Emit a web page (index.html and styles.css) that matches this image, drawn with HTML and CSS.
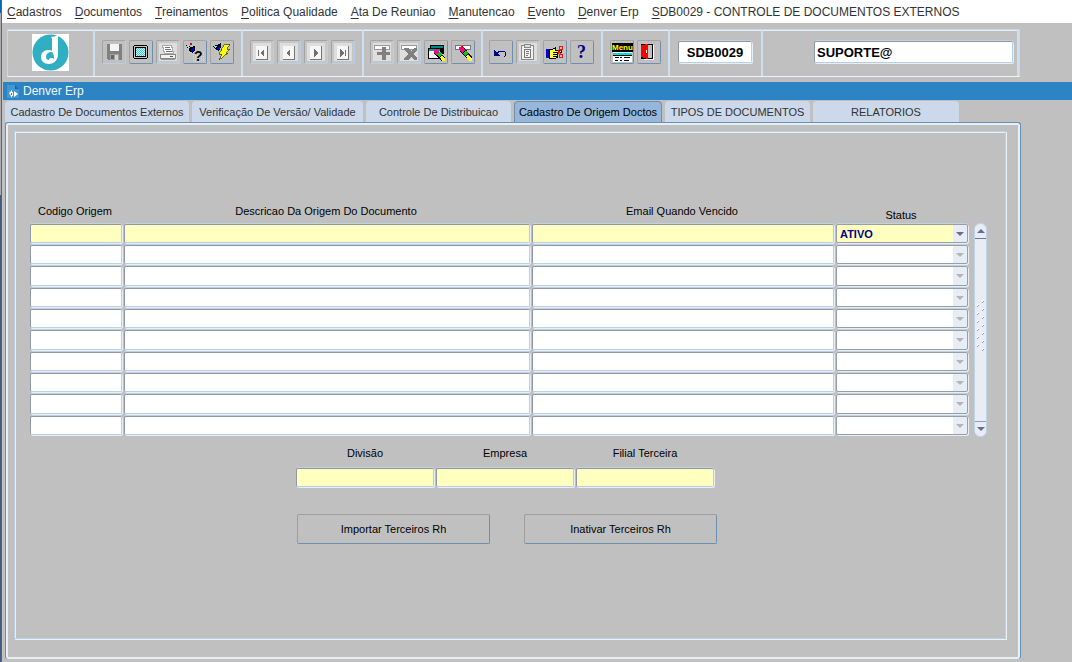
FILE: index.html
```
<!DOCTYPE html>
<html lang="pt-BR">
<head>
    <meta charset="UTF-8">
    <meta name="viewport" content="width=device-width, initial-scale=1.0">
    <title>Denver Erp</title>
    <link rel="stylesheet" href="styles.css">
</head>
<body>
    <div class="edge"></div>
    <div class="window">
        <nav class="menubar">
            <a href="#"><u>C</u>adastros</a>
            <a href="#"><u>D</u>ocumentos</a>
            <a href="#"><u>T</u>reinamentos</a>
            <a href="#"><u>P</u>olitica Qualidade</a>
            <a href="#"><u>A</u>ta De Reuniao</a>
            <a href="#"><u>M</u>anutencao</a>
            <a href="#"><u>E</u>vento</a>
            <a href="#"><u>D</u>enver Erp</a>
            <a href="#"><u>S</u>DB0029 - CONTROLE DE DOCUMENTOS EXTERNOS</a>
        </nav>

        <header class="toolbar">
            <div class="group">
                <svg class="logo" viewBox="0 0 37 37">
                    <rect width="37" height="37" fill="#fff"/>
                    <circle cx="18.5" cy="18.5" r="18" fill="#2fafc1"/>
                    <path d="M19 3c2 0 5-1 7-2v19c0 6-4 10-9 10-5 0-8-3-8-7s3-7 7-7c2 0 3 0 4 1V7c0-2 0-3-1-4z" fill="#fff"/>
                    <path d="M20 18c-4 0-6 2-6 5 0 2 1 3 3 3 0-2 4-3 5-1 0-2 0-5-2-7z" fill="#2fafc1"/>
                    <path d="M17 26c0-2 3-2 3-1 1 2-2 3-4 2z" fill="#fff"/>
                </svg>
            </div>
            <div class="group">
                <button class="tool off" aria-label="Salvar">
                    <svg viewBox="0 0 22 22"><path d="M4 3h14l1 1v15H5l-1-1z" fill="#808080"/><path d="M7 3h9v7H7z" fill="#f4f4f4"/><path d="M7 13h9v6H7z" fill="#a0a0a0"/><path d="M8 14h3v4H8z" fill="#666"/><path d="M12 14h3v5h-3z" fill="#d4d4d4"/></svg>
                </button>
                <button class="tool" aria-label="Imprimir tela">
                    <svg viewBox="0 0 22 22"><path d="M4 4h13v1h1v12h-1v1H4v-1H3V5h1z" fill="#000"/><path d="M4 5h13v12H4z" fill="#c0c0c0"/><path d="M5 6h11v10H5z" fill="#000"/><path d="M6 7h9v8H6z" fill="#d8ffff"/><path d="M6 7.500h9M6 9.500h9M6 11.500h9M6 13.500h9" stroke="#3cc8d4" stroke-dasharray="1 1"/><path d="M7 8.500h8M7 10.500h8M7 12.500h8M7 14.500h8" stroke="#3cc8d4" stroke-dasharray="1 1"/></svg>
                </button>
                <button class="tool off lit" aria-label="Imprimir">
                    <svg viewBox="0 0 22 22"><path d="M5.500 4.500h9l2 8h-9z" fill="#fff" stroke="#aaa"/><path d="M8 6.500h5M8 8.500h6M9 10.500h6" stroke="#777"/><path d="M3.500 13.500h15v4h-15z" fill="#f2f2f2" stroke="#888"/><path d="M4 18.500h14" stroke="#999"/><path d="M13 15.500h3" stroke="#555"/></svg>
                </button>
                <button class="tool" aria-label="Entrar consulta">
                    <svg viewBox="0 0 22 22"><path d="M2 4l5 2 4-1v4l-2 3-3-1z" fill="#000"/><path d="M3 5l3 1-1 3z" fill="#7ee"/><path d="M6 9l4-3v4l-2 1z" fill="#00d"/><path d="M6 2h2v2H6z" fill="#d00"/><path d="M9.500 11v10M11.500 10v11M13.500 10v11M15.500 10v11M17.500 11v10M19.500 11v10" stroke="#f2e94a" stroke-dasharray="1 1"/><text x="10" y="20" class="mark">?</text></svg>
                </button>
                <button class="tool" aria-label="Executar consulta">
                    <svg viewBox="0 0 22 22"><path d="M2 5l4-1 4-2v4l-2 4-3-1z" fill="#000"/><path d="M3 5h3l-1 3z" fill="#7ee"/><path d="M6 7l3-3v3l-2 2z" fill="#00d"/><path d="M14 3h5l-3 5h3l-4 4h2L8 19l3-6H8l3-5h-1z" fill="#ff0" stroke="#333" stroke-width=".7"/></svg>
                </button>
            </div>
            <div class="group">
                <button class="tool off lit" aria-label="Primeiro"><svg viewBox="0 0 22 22"><path d="M5 5h12v14H5z" fill="#777"/><path d="M5 5h11v13H5z" fill="#f6f6f6"/><path d="M7 9h1v6H7zM13 8v8l-4-4z" fill="#707070"/></svg></button>
                <button class="tool off lit" aria-label="Anterior"><svg viewBox="0 0 22 22"><path d="M5 5h12v14H5z" fill="#777"/><path d="M5 5h11v13H5z" fill="#f6f6f6"/><path d="M12 8v8l-4-4z" fill="#707070"/></svg></button>
                <button class="tool off lit" aria-label="Proximo"><svg viewBox="0 0 22 22"><path d="M5 5h12v14H5z" fill="#777"/><path d="M5 5h11v13H5z" fill="#f6f6f6"/><path d="M9 8v8l4-4z" fill="#707070"/></svg></button>
                <button class="tool off lit" aria-label="Ultimo"><svg viewBox="0 0 22 22"><path d="M5 5h12v14H5z" fill="#777"/><path d="M5 5h11v13H5z" fill="#f6f6f6"/><path d="M8 8v8l4-4zM13 9h1v6h-1z" fill="#707070"/></svg></button>
            </div>
            <div class="group">
                <button class="tool off lit" aria-label="Inserir"><svg viewBox="0 0 22 22"><path d="M3 4h16v5H3z" fill="#999"/><path d="M4 5h14v3H4z" fill="#fff"/><path d="M11 6h4v5h4v3h-4v5h-4v-5H6v-3h5z" fill="#808080"/></svg></button>
                <button class="tool off lit" aria-label="Remover"><svg viewBox="0 0 22 22"><path d="M3 4h16v5H3z" fill="#999"/><path d="M4 5h14v3H4z" fill="#fff"/><path d="M6 7h4l3 3 3-3h3v2l-4 4 4 4v2h-3l-3-3-3 3H6v-2l4-4-4-4z" fill="#808080"/></svg></button>
                <button class="tool" aria-label="Limpar bloco"><svg viewBox="0 0 22 22"><path d="M5 4h14v9H5z" fill="#000"/><path d="M6 5h12v2H6z" fill="#088"/><path d="M3 7h13v11H3z" fill="#000"/><path d="M4 8h11v2H4z" fill="#099"/><path d="M4 10h11v7H4z" fill="#f0f0f0"/><path d="M9 9l3-1 8 9v3h-4l-7-8z" fill="#000"/><path d="M9 9l3-1 2 3-3 3-2-2z" fill="#f08"/><path d="M12 13l3-3 2 3-3 3z" fill="#0c2"/><path d="M15 16l2-2 3 4v2h-3z" fill="#ff2"/></svg></button>
                <button class="tool" aria-label="Limpar registro"><svg viewBox="0 0 22 22"><path d="M3 4h16v5H3z" fill="#777"/><path d="M4 5h14v3H4z" fill="#fff"/><path d="M8 6l3-1 9 11v4h-3L8 10z" fill="#000"/><path d="M7 6l4-1 2 4-3 3-3-3z" fill="#f08"/><path d="M9 5h2v2H9z" fill="#f00"/><path d="M11 12l3-3 2 3-3 3z" fill="#0c2"/><path d="M14 15l2-2 4 5v2h-3z" fill="#ff2"/></svg></button>
            </div>
            <div class="group">
                <button class="tool" aria-label="Desfazer"><svg viewBox="0 0 22 22"><path d="M6 13c3-4 10-4 10 0 0 1-1 3-2 3" fill="none" stroke="#000080"/><path d="M4 9v6h6z" fill="#000080"/></svg></button>
                <button class="tool off lit" aria-label="Lista"><svg viewBox="0 0 22 22"><path d="M4.500 4.500h12v14h-12z" fill="#f2f2f2" stroke="#888"/><path d="M7.500 3.500h6v3h-6z" fill="#ddd" stroke="#888"/><path d="M7.500 8.500h6v8h-6zM9 10.500h3M9 12.500h3M9 14.500h2" fill="none" stroke="#777"/></svg></button>
                <button class="tool" aria-label="Recortar"><svg viewBox="0 0 22 22"><path d="M2 8h3v9H2z" fill="#00c"/><path d="M5.500 8.500h3l3-2v3h6v2h-4v5l-3 1h-5z" fill="#ff3" stroke="#000"/><path d="M9 11.500h5M9 13.500h5M9 15.500h4" stroke="#000"/><path d="M15.500 5.500h3v3h-3zM15.500 13.500h3v3h-3z" fill="none" stroke="#e11"/><path d="M14 13l3-4M14 9l3 5" stroke="#e11"/></svg></button>
                <button class="tool" aria-label="Ajuda"><svg viewBox="0 0 22 22"><text x="6" y="17" class="mark big">?</text></svg></button>
            </div>
            <div class="group">
                <button class="tool" aria-label="Menu"><svg viewBox="0 0 22 22"><path d="M1 2h21v9H1z" fill="#000"/><text x="1" y="9" class="menu-word">Menu</text><path d="M2 11h19v1H2z" fill="#fff"/><path d="M2 12h19v2H2z" fill="#0dd"/><path d="M2 14h19v1H2z" fill="#000"/><path d="M2 15h19v6H2z" fill="#fff"/><path d="M4 16.500h4M4 19.500h3M9 16.500h2M9 19.500h2M13 16.500h6M13 19.500h5" stroke="#000"/></svg></button>
                <button class="tool" aria-label="Sair"><svg viewBox="0 0 22 22"><path d="M3 3h12v15H3z" fill="#000"/><path d="M10 4h4v13h-4z" fill="#c0c0c0"/><path d="M15 4h1v15H6v-1h9z" fill="#fff"/><path d="M3 4l7-1v15l-7-2z" fill="#f00"/><path d="M8 9h1v3H8z" fill="#fff"/></svg></button>
            </div>
            <div class="group">
                <input class="code" type="text" value="SDB0029" aria-label="Programa">
            </div>
            <div class="group end">
                <input class="user" type="text" value="SUPORTE@" aria-label="Usuario">
            </div>
        </header>

        <div class="titlebar">
            <svg viewBox="0 0 13 14"><path d="M0 1h8l4 4v9H0z" fill="#4199d4"/><path d="M8 1v4h4z" fill="#176aa8"/><path d="M2 9l3-3v2h1v4H5v2zM7 7l4 3-4 3z" fill="#fff"/><path d="M4 9h1v2H4z" fill="#2c84c4"/></svg>
            <span>Denver Erp</span>
        </div>

        <div class="tabs" role="tablist">
            <button role="tab">Cadastro De Documentos Externos</button>
            <button role="tab">Verificação De Versão/ Validade</button>
            <button role="tab">Controle De Distribuicao</button>
            <button role="tab" class="active" aria-selected="true">Cadastro De Origem Doctos</button>
            <button role="tab">TIPOS DE DOCUMENTOS</button>
            <button role="tab">RELATORIOS</button>
        </div>

        <main class="panel">
            <form class="canvas">
                <div class="records">
                    <table>
                        <colgroup>
                            <col class="col-codigo">
                            <col class="col-descricao">
                            <col class="col-email">
                            <col class="col-status">
                        </colgroup>
                        <thead>
                            <tr>
                                <th>Codigo Origem</th>
                                <th>Descricao Da Origem Do Documento</th>
                                <th>Email Quando Vencido</th>
                                <th class="low">Status</th>
                            </tr>
                        </thead>
                        <tbody id="rows">
                            <tr class="current">
                                <td><input type="text" aria-label="Codigo Origem"></td>
                                <td><input type="text" aria-label="Descricao Da Origem Do Documento"></td>
                                <td><input type="text" aria-label="Email Quando Vencido"></td>
                                <td><span class="combo"><select aria-label="Status"><option>ATIVO</option><option>INATIVO</option></select></span></td>
                            </tr>
                        </tbody>
                    </table>
                    <div class="scrollbar">
                        <button type="button" class="up" aria-label="Subir"></button>
                        <div class="thumb">
                            <svg viewBox="0 0 9 52">
                                <defs>
                                    <pattern id="grip" width="9" height="8" patternUnits="userSpaceOnUse">
                                        <path d="M6 0h2v1H7v1H6zM1 4h2v1H2v1H1z" fill="#fff"/>
                                        <path d="M7 1h1v1H7v1H6V2h1zM2 5h1v1H2v1H1V6h1z" fill="#8aa2ba"/>
                                    </pattern>
                                </defs>
                                <rect width="9" height="52" fill="url(#grip)"/>
                            </svg>
                        </div>
                        <button type="button" class="down" aria-label="Descer"></button>
                    </div>
                </div>

                <div class="filters">
                    <div><label for="divisao">Divisão</label><input type="text" id="divisao"></div>
                    <div><label for="empresa">Empresa</label><input type="text" id="empresa"></div>
                    <div><label for="filial">Filial Terceira</label><input type="text" id="filial"></div>
                </div>

                <div class="actions">
                    <button type="button">Importar Terceiros Rh</button>
                    <button type="button">Inativar Terceiros Rh</button>
                </div>
            </form>
        </main>
    </div>

    <script src="script.js"></script>
</body>
</html>
```
FILE: styles.css
```
* {
    margin: 0;
    padding: 0;
    box-sizing: border-box;
    font-family: "Liberation Sans", Arial, sans-serif;
}

body {
    display: flex;
    min-height: 100vh;
    background: #c0c0c0;
    color: #000;
    font-size: 11px;
}

.edge {
    width: 2px;
    background: linear-gradient(#0b64b8 13px, #a9abb0 13px, #a9abb0 195px, #46597c 195px);
    border-right: 1px solid #5c6470;
}

.window {
    flex: 1;
    display: flex;
    flex-direction: column;
    padding-bottom: 3px;
}

.menubar {
    display: flex;
    gap: 13px;
    height: 23px;
    padding: 0 5px;
    line-height: 24px;
    background: #fff;
}

.menubar a {
    color: #333;
    font-size: 12px;
    text-decoration: none;
    white-space: nowrap;
}

.menubar u {
    text-underline-offset: 2px;
}

/* toolbar */
.toolbar {
    display: grid;
    grid-template-columns: 87px 148px 121px 119px 120px 67px 93px 1fr;
    height: 48px;
    margin: 6px 52px 5px 5px;
    border: 1px solid #c5d7ea;
    border-bottom-color: #eef4fb;
    box-shadow: inset 0 1px #e6eef7;
}

.group {
    display: flex;
    align-items: center;
    justify-content: center;
    gap: 3px;
    padding: 0 1px 2px 0;
    border-right: 2px solid #cddef0;
}

.group.end {
    justify-content: flex-end;
    padding-right: 4px;
}

.logo {
    width: 37px;
    height: 37px;
}

.tool {
    width: 24px;
    height: 24px;
    background: #c0c0c0;
    border: 1px solid #a3a3a3;
    border-right-color: #6f8fb0;
    border-bottom-color: #6f8fb0;
    border-radius: 2px;
}

.tool svg {
    display: block;
    width: 22px;
    height: 22px;
    shape-rendering: crispEdges;
}

.tool.off {
    border-right-color: #b8cfe5;
    border-bottom-color: #b8cfe5;
}

.tool.lit {
    background: #dedede;
    box-shadow: inset 0 0 0 2px #c6c6c6;
}

.mark {
    font: bold 14px "Liberation Sans", sans-serif;
}

.mark.big {
    font: bold 18px "Liberation Serif", serif;
    fill: #000080;
}

.menu-word {
    font: bold 8px "Liberation Sans", sans-serif;
    fill: #ff0;
}

input,
select {
    height: 19px;
    background: #fff;
    border: 1px solid #8f99a5;
    border-right-color: #b8cfe5;
    border-bottom-color: #b8cfe5;
    border-radius: 2px;
    box-shadow: 1px 1px #e8eef6, 0 -1px #c3d0de;
}

.code,
.user {
    height: 22px;
    font-size: 13px;
    font-weight: bold;
}

.code {
    width: 74px;
    text-align: center;
}

.user {
    width: 199px;
    padding-left: 2px;
}

.titlebar {
    display: flex;
    align-items: center;
    gap: 3px;
    height: 18px;
    margin-left: 1px;
    padding-left: 4px;
    background: #2c84c4;
    color: #f4f8fc;
    font-size: 12px;
}

.titlebar svg {
    width: 13px;
    height: 14px;
}

/* tabs */
.tabs {
    display: grid;
    grid-template-columns: 184px 171px 145px 148px 145px 146px;
    gap: 3px;
    height: 22px;
    padding: 1px 3px 0;
}

.tabs button {
    background: #cbd9ea;
    border: 0;
    border-radius: 4px 4px 0 0;
    color: #333;
    font-size: 11px;
    white-space: nowrap;
}

.tabs .active {
    background: #96b7da;
    border: 1px solid #6f8fb0;
    border-bottom: 0;
    color: #000;
}

.panel {
    flex: 1;
    display: flex;
    margin: 0 51px 0 3px;
    padding: 8px 14px 20px 8px;
    border: 1px solid #6a8fb5;
    border-bottom: 0;
    border-radius: 3px;
    box-shadow: inset 0 0 0 2px #e8eef6;
}

.canvas {
    flex: 1;
    padding: 72px 14px 0 15px;
    border: 1px solid #b8d0e8;
    box-shadow: inset 1px 1px #eaf1f9, 1px 1px #eaf1f9;
}

/* records */
.records {
    display: flex;
    align-items: flex-end;
    gap: 4px;
}

table {
    width: 940px;
    table-layout: fixed;
    border-collapse: collapse;
}

.col-codigo { width: 94px; }
.col-descricao { width: 408px; }
.col-email { width: 304px; }
.col-status { width: 134px; }

th {
    height: 20px;
    padding-right: 4px;
    font-weight: normal;
    line-height: 14px;
    vertical-align: top;
}

th.low {
    vertical-align: bottom;
    line-height: 18px;
}

td {
    height: 21px;
    padding: 0 2px 2px 0;
    line-height: 0;
}

tbody tr:nth-child(3n) td {
    height: 22px;
}

td input {
    width: 100%;
}

tbody tr:nth-child(3n) input,
tbody tr:nth-child(3n) select {
    height: 20px;
}

.current input,
.current select,
.filters input {
    background-color: #ffffc0;
}

.combo {
    position: relative;
    display: block;
}

.combo select {
    width: 100%;
    padding-left: 3px;
    appearance: none;
    background-image: linear-gradient(#e8edf5, #e8edf5);
    background-position: right;
    background-size: 14px 100%;
    background-repeat: no-repeat;
    border-color: #989ea6;
    color: #000080;
    font-size: 11px;
    font-weight: bold;
    opacity: 1;
}

.combo::after {
    content: "";
    position: absolute;
    top: 8px;
    right: 4px;
    border: 4px solid transparent;
    border-top-color: #b4b4b4;
    border-bottom: 0;
}

.current .combo::after {
    border-top-color: #686c90;
}

.scrollbar {
    display: flex;
    flex-direction: column;
    width: 13px;
    height: 214px;
    background: #e8edf5;
    border: 1px solid #c0d2e6;
    border-radius: 6px;
}

.scrollbar button {
    display: grid;
    place-items: center;
    height: 15px;
    background: none;
    border: 0;
}

.scrollbar .up {
    border-bottom: 1px solid #6b7890;
}

.scrollbar .down {
    border-top: 1px solid #8ba0b8;
}

.scrollbar button::before {
    content: "";
    border: 4px solid transparent;
}

.scrollbar .up::before {
    border-top: 0;
    border-bottom-color: #686c90;
}

.scrollbar .down::before {
    border-bottom: 0;
    border-top-color: #686c90;
}

.thumb {
    flex: 1;
    display: grid;
    place-items: center;
    padding-bottom: 8px;
}

.thumb svg {
    width: 9px;
    height: 52px;
}

/* lower block */
.filters {
    display: flex;
    gap: 2px;
    margin: 9px 0 0 266px;
}

.filters div {
    display: flex;
    flex-direction: column;
    width: 138px;
}

.filters label {
    height: 22px;
    line-height: 14px;
    text-align: center;
}

.actions {
    display: flex;
    gap: 34px;
    margin: 27px 0 0 267px;
}

.actions button {
    width: 193px;
    height: 30px;
    background: #c0c0c0;
    border: 1px solid #9e9e9e;
    border-right-color: #6f8fb0;
    border-bottom-color: #6f8fb0;
    border-radius: 2px;
    font-size: 11px;
}
```
FILE: script.js
```
// remaining empty records
const rows = document.getElementById('rows');

for (let i = 2; i <= 10; i++) {
    const tr = document.createElement('tr');
    tr.innerHTML = `
        <td><input type="text" aria-label="Codigo Origem ${i}"></td>
        <td><input type="text" aria-label="Descricao ${i}"></td>
        <td><input type="text" aria-label="Email ${i}"></td>
        <td><span class="combo"><select aria-label="Status ${i}" disabled><option></option></select></span></td>`;
    rows.appendChild(tr);
}
```
